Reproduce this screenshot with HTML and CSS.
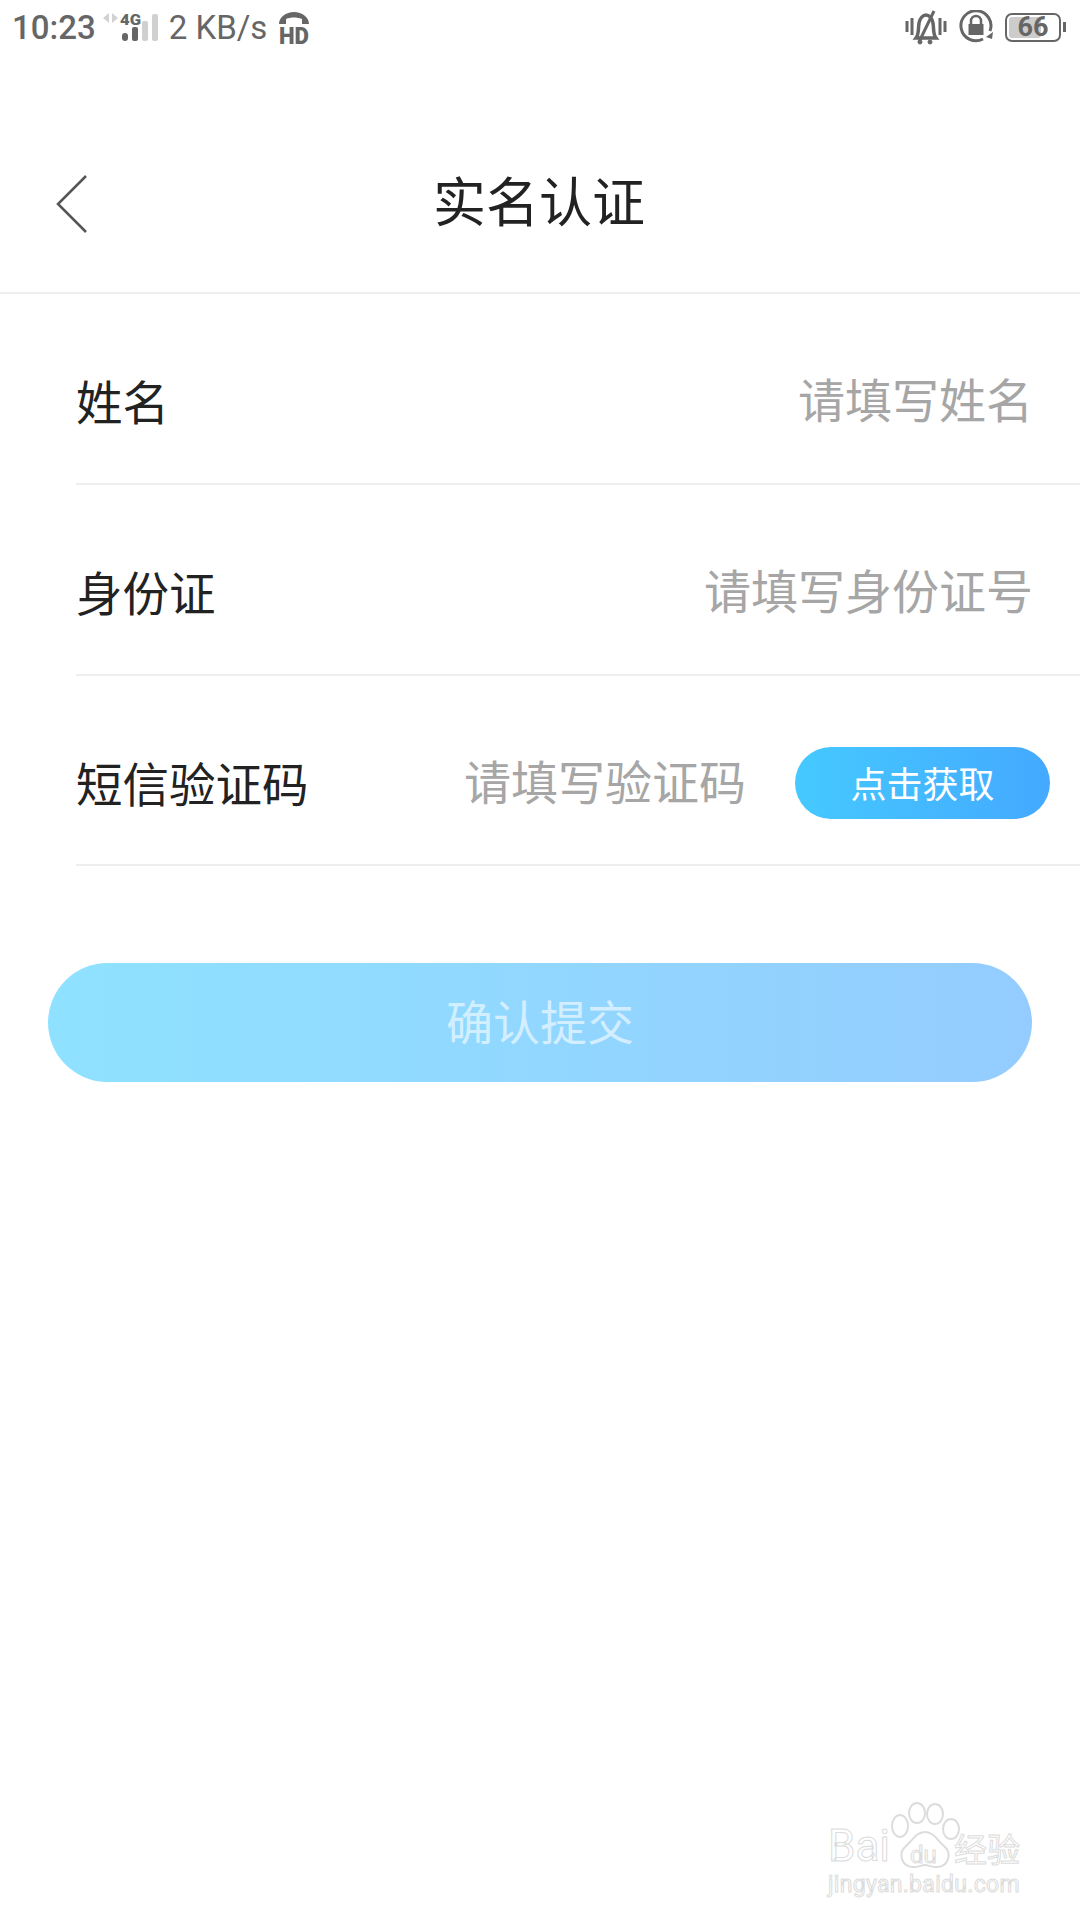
FILE: index.html
```html
<!DOCTYPE html>
<html lang="zh-CN">
<head>
    <meta charset="UTF-8">
    <meta name="viewport" content="width=device-width, initial-scale=1.0">
    <title>实名认证</title>
    <link rel="stylesheet" href="styles.css">
</head>
<body>
    <div class="status-bar">
        <span class="status-time">10:23</span>
        <svg class="status-signal" width="58" height="32" viewBox="0 0 58 32">
            <path d="M7 1v10L1 6zM10 1v10l6-5z" fill="#d2d2d2"/>
            <text x="18" y="13" class="signal-label" textLength="21" lengthAdjust="spacingAndGlyphs">4G</text>
            <rect x="20" y="21" width="6" height="8" rx="3" fill="#666"/>
            <rect x="30" y="15" width="6" height="14" rx="2" fill="#666"/>
            <rect x="40" y="9" width="6" height="20" rx="2" fill="#d0d0d0"/>
            <rect x="50" y="2" width="6" height="27" rx="2" fill="#d0d0d0"/>
        </svg>
        <span class="status-speed">2 KB/s</span>
        <svg class="status-hd" width="32" height="34" viewBox="0 0 32 34">
            <path d="M1 13C1 6 8 1 16 1s15 5 15 12H24V8C19 6 13 6 8 8v5z" fill="#666"/>
            <text x="1" y="33" class="hd-label" textLength="30" lengthAdjust="spacingAndGlyphs">HD</text>
        </svg>
        <div class="status-right">
            <svg width="42" height="36" viewBox="0 0 42 36" fill="none" stroke="#666">
                <path d="M2 12v11M7 9v17M35 9v17M40 12v11" stroke-width="3"/>
                <path d="M11 29c3-4 2-8 3-15 1-5 4-8 7-8s6 3 7 8c1 7 0 11 3 15z" stroke-width="3.500"/>
                <path d="M14 33L29 2" stroke-width="3"/>
                <circle cx="15" cy="33" r="2" fill="#666"/>
                <circle cx="25" cy="33" r="2" fill="#666"/>
            </svg>
            <svg width="34" height="34" viewBox="0 0 34 34" fill="none">
                <path d="M24 29A15 15 0 1 1 31 21" stroke="#666" stroke-width="3"/>
                <path d="M27 27l7-5-1 7z" fill="#666"/>
                <path d="M12 15v-4a5 5 0 0 1 10 0v4" stroke="#666" stroke-width="2.500"/>
                <rect x="9.500" y="14" width="15" height="11" fill="#666"/>
            </svg>
            <div class="battery">
                <div class="battery-body">
                    <div class="battery-fill"></div>
                    <span class="battery-num">66</span>
                </div>
                <div class="battery-tip"></div>
            </div>
        </div>
    </div>

    <div class="header">
        <svg class="back" width="32" height="58" viewBox="0 0 32 58" fill="none">
            <path d="M30 1L2 29l28 28" stroke="#555" stroke-width="2.500"/>
        </svg>
        <h1>实名认证</h1>
    </div>

    <form class="form">
        <div class="row">
            <label>姓名</label>
            <span class="hint">请填写姓名</span>
        </div>
        <div class="row">
            <label>身份证</label>
            <span class="hint">请填写身份证号</span>
        </div>
        <div class="row row-code">
            <label>短信验证码</label>
            <span class="hint">请填写验证码</span>
            <button type="button" class="get-code">点击获取</button>
        </div>
    </form>

    <button type="button" class="submit">确认提交</button>

    <div class="watermark">
        <div class="wm-top">
            <span class="wm-bai">Bai</span>
            <div class="wm-paw">
                <svg width="74" height="72" viewBox="0 0 74 72" fill="#fff" stroke="#dcdcdc" stroke-width="2">
                    <ellipse cx="12" cy="24" rx="8" ry="11"/>
                    <ellipse cx="29" cy="11" rx="8" ry="10"/>
                    <ellipse cx="47" cy="12" rx="8" ry="10"/>
                    <ellipse cx="63" cy="27" rx="8" ry="10"/>
                    <path d="M37 30c9 0 13 9 19 14 9 8 4 22-9 21-4 0-7-2-10-2s-6 2-10 2c-13 1-18-13-9-21 6-5 10-14 19-14z"/>
                </svg>
                <span class="wm-du">du</span>
            </div>
            <span class="wm-jy">经验</span>
        </div>
        <div class="wm-url">jingyan.baidu.com</div>
    </div>
</body>
</html>
```

FILE: styles.css
```css
body {
    font-family: "Noto Sans CJK SC", Roboto, sans-serif;
    background-color: #fff;
    color: #222;
    margin: 0;
    width: 1080px;
    height: 1920px;
    position: relative;
    overflow: hidden;
}

.status-bar {
    height: 54px;
    display: flex;
    align-items: center;
    padding: 0 14px 0 12px;
    box-sizing: border-box;
    font-family: Roboto, sans-serif;
    color: #666;
}

.status-time {
    font-size: 33px;
    font-weight: 500;
}

.status-signal {
    margin-left: 6px;
    margin-top: 2px;
    overflow: visible;
}

.signal-label {
    font-family: Roboto, sans-serif;
    font-size: 15px;
    font-weight: 900;
    fill: #666;
}

.status-speed {
    font-size: 33px;
    margin-left: 9px;
}

.status-hd {
    margin-left: 11px;
    margin-top: 2px;
    overflow: visible;
}

.hd-label {
    font-family: Roboto, sans-serif;
    font-size: 24px;
    font-weight: 900;
    fill: #666;
}

.status-right {
    margin-left: auto;
    display: flex;
    align-items: center;
    gap: 12px;
}

.battery {
    display: flex;
    align-items: center;
    gap: 2px;
}

.battery-body {
    width: 56px;
    height: 29px;
    border: 2px solid #666;
    border-radius: 7px;
    box-sizing: border-box;
    position: relative;
    display: flex;
    justify-content: center;
    align-items: center;
}

.battery-fill {
    position: absolute;
    left: 2px;
    top: 2px;
    bottom: 2px;
    width: 32px;
    border-radius: 3px;
    background-color: #ccc;
}

.battery-num {
    position: relative;
    font-size: 27px;
    font-weight: 700;
    line-height: 1;
    color: #666;
}

.battery-tip {
    width: 3px;
    height: 10px;
    background-color: #666;
}

.header {
    height: 240px;
    box-sizing: border-box;
    border-bottom: 2px solid #eee;
    padding-top: 52px;
    padding-right: 2px;
    display: flex;
    justify-content: center;
    align-items: center;
    position: relative;
}

.header h1 {
    margin: 0;
    font-size: 53px;
    font-weight: 400;
    line-height: 60px;
}

.back {
    position: absolute;
    left: 56px;
    top: 121px;
}

.form {
    padding-left: 76px;
}

.row {
    height: 191px;
    box-sizing: border-box;
    border-bottom: 2px solid #eee;
    display: flex;
    align-items: center;
    justify-content: space-between;
    padding-top: 22px;
    padding-right: 47px;
    font-size: 46.500px;
}

.row-code {
    height: 190px;
    padding-right: 30px;
}

.hint {
    color: #a6a6a6;
    font-size: 47px;
    margin-bottom: 4px;
}

.row-code .hint {
    margin-left: auto;
    margin-right: 49px;
}

.get-code {
    width: 255px;
    height: 72px;
    margin-top: 3px;
    border: none;
    border-radius: 36px;
    padding: 0 0 2px;
    background: linear-gradient(90deg, #45c9ff, #44a9ff);
    color: #fff;
    font-family: inherit;
    font-size: 36px;
}

.submit {
    display: block;
    width: 984px;
    height: 119px;
    margin: 97px 0 0 48px;
    border: none;
    border-radius: 60px;
    padding: 0 0 6px;
    background: linear-gradient(90deg, #8fe2ff, #94ccff);
    color: rgba(255, 255, 255, 0.6);
    font-family: inherit;
    font-size: 47px;
}

.watermark {
    position: absolute;
    left: 828px;
    top: 1802px;
    width: 194px;
    color: #fff;
    -webkit-text-stroke: 1px #dcdcdc;
}

.wm-top {
    display: flex;
    align-items: flex-end;
    height: 72px;
}

.wm-bai {
    font-family: Roboto, sans-serif;
    font-size: 44px;
    line-height: 44px;
    width: 64px;
    margin-bottom: 6px;
}

.wm-paw {
    position: relative;
    width: 66px;
    height: 72px;
    margin-left: -4px;
}

.wm-du {
    position: absolute;
    left: 22px;
    top: 41px;
    font-family: Roboto, sans-serif;
    font-size: 24px;
    line-height: 24px;
}

.wm-jy {
    font-size: 33px;
    line-height: 40px;
    margin-bottom: 6px;
    white-space: nowrap;
}

.wm-url {
    font-family: Roboto, sans-serif;
    font-size: 23px;
    line-height: 22px;
    letter-spacing: 0.300px;
    white-space: nowrap;
}
```
